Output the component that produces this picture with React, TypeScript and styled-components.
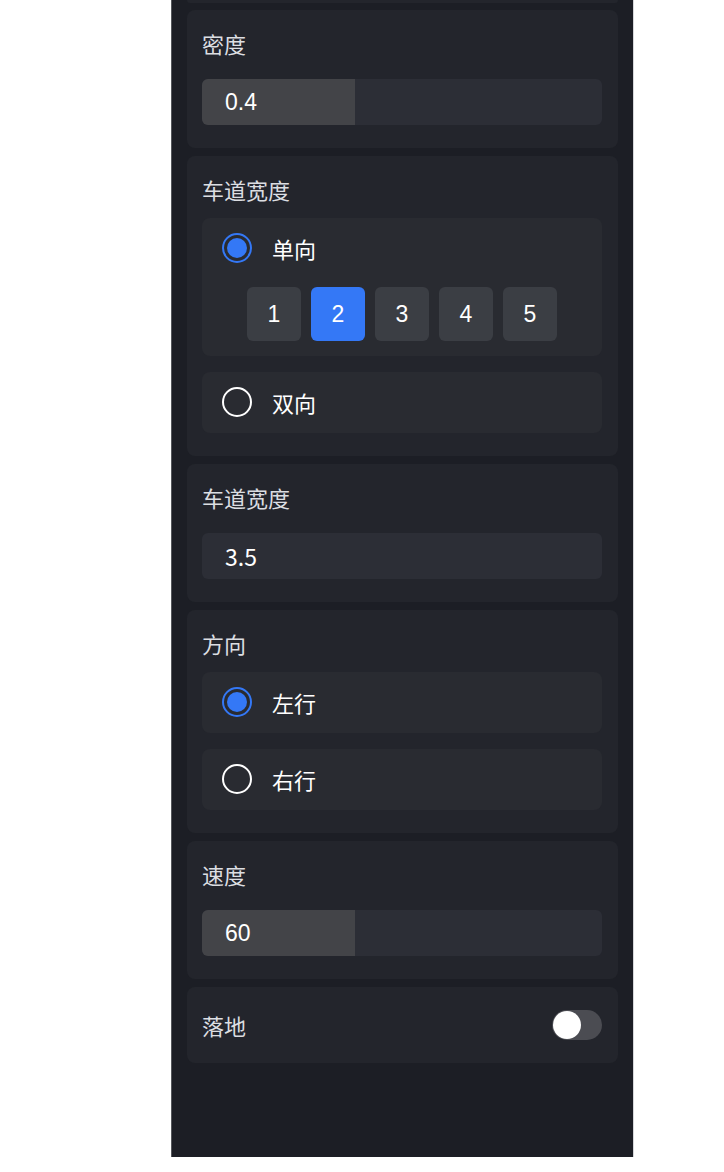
import React, { FC, useState } from 'react'
import styled, { createGlobalStyle } from 'styled-components'

const GlobalStyle = createGlobalStyle`
  html, body {
    margin: 0;
    padding: 0;
    background: #ffffff;
  }
  body {
    font-family: 'Liberation Sans', 'Noto Sans CJK SC', sans-serif;
  }
`

type TSlider = { value: string }

const SliderField: FC<TSlider> = (props: TSlider) => (
  <SliderTrack>
    <SliderValue>{props.value}</SliderValue>
  </SliderTrack>
)

type TRadio = { checked: boolean; label: string; children?: React.ReactNode; onSelect: () => void }

const RadioOption: FC<TRadio> = (props: TRadio) => (
  <OptionBox $extended={!!props.children}>
    <OptionRow onClick={props.onSelect}>
      <RadioCircle $checked={props.checked} />
      <OptionLabel>{props.label}</OptionLabel>
    </OptionRow>
    {props.children}
  </OptionBox>
)

export default function App() {
  const [mode, setMode] = useState<'single' | 'double'>('single')
  const [lanes, setLanes] = useState(2)
  const [dir, setDir] = useState<'left' | 'right'>('left')
  const [ground, setGround] = useState(false)

  return (
    <Page>
      <GlobalStyle />
      <Panel>
        <CardStub />

        <Card>
          <Title $gap={21}>密度</Title>
          <SliderField value="0.4" />
        </Card>

        <Card>
          <Title $gap={14}>车道宽度</Title>
          <OptionList>
            <RadioOption checked={mode === 'single'} label="单向" onSelect={() => setMode('single')}>
              <LaneButtons>
                {[1, 2, 3, 4, 5].map((n) => (
                  <LaneButton key={n} $active={lanes === n} onClick={() => setLanes(n)}>
                    {n}
                  </LaneButton>
                ))}
              </LaneButtons>
            </RadioOption>
            <RadioOption checked={mode === 'double'} label="双向" onSelect={() => setMode('double')} />
          </OptionList>
        </Card>

        <Card>
          <Title $gap={21}>车道宽度</Title>
          <TextInput>3.5</TextInput>
        </Card>

        <Card>
          <Title $gap={14}>方向</Title>
          <OptionList>
            <RadioOption checked={dir === 'left'} label="左行" onSelect={() => setDir('left')} />
            <RadioOption checked={dir === 'right'} label="右行" onSelect={() => setDir('right')} />
          </OptionList>
        </Card>

        <Card>
          <Title $gap={21}>速度</Title>
          <SliderField value="60" />
        </Card>

        <SwitchCard>
          <Title $gap={0}>落地</Title>
          <Switch $on={ground} onClick={() => setGround(!ground)}>
            <Knob />
          </Switch>
        </SwitchCard>
      </Panel>
    </Page>
  )
}

const Page = styled.div`
  display: flex;
  min-height: 1172px;
`

const Panel = styled.div`
  margin-left: 171px;
  width: 463px;
  height: 1157px;
  box-sizing: border-box;
  padding: 0 15px 0 15px;
  background: #1c1e25;
  border-left: 1px solid #55575c;
  border-right: 1px solid #d6d7da;
  display: flex;
  flex-direction: column;
  gap: 8px;
  overflow: hidden;
`

const CardStub = styled.div`
  height: 3px;
  flex-shrink: 0;
  background: #23252c;
  border-radius: 0 0 8px 8px;
  margin-bottom: -1px;
`

const Card = styled.div`
  background: #23252c;
  border-radius: 8px;
  padding: 18px 16px 23px 15px;
  display: flex;
  flex-direction: column;
`

const SwitchCard = styled(Card)`
  flex-direction: row;
  align-items: center;
  justify-content: space-between;
  padding: 23px 16px 23px 15px;
`

const Title = styled.div<{ $gap: number }>`
  font-family: 'Noto Sans CJK SC', sans-serif;
  font-size: 22px;
  line-height: 30px;
  color: #dcdee2;
  margin-bottom: ${(p) => p.$gap}px;
`

const SliderTrack = styled.div`
  height: 46px;
  border-radius: 6px;
  background: #2c2e36;
  overflow: hidden;
  display: flex;
`

const SliderValue = styled.div`
  width: 153px;
  background: #434448;
  box-sizing: border-box;
  padding-left: 23px;
  display: flex;
  align-items: center;
  font-size: 23px;
  color: #ffffff;
`

const TextInput = styled.div`
  height: 46px;
  border-radius: 6px;
  background: #2c2e36;
  box-sizing: border-box;
  padding-left: 23px;
  display: flex;
  align-items: center;
  font-family: 'Noto Sans CJK SC', sans-serif;
  font-size: 23px;
  color: #ffffff;
`

const OptionList = styled.div`
  display: flex;
  flex-direction: column;
  gap: 16px;
`

const OptionBox = styled.div<{ $extended: boolean }>`
  background: #292b31;
  border-radius: 8px;
  padding-bottom: ${(p) => (p.$extended ? 15 : 1)}px;
`

const OptionRow = styled.div`
  height: 60px;
  display: flex;
  align-items: center;
  padding-left: 20px;
  gap: 20px;
  cursor: pointer;
`

const RadioCircle = styled.span<{ $checked: boolean }>`
  width: 30px;
  height: 30px;
  box-sizing: border-box;
  border-radius: 50%;
  border: 2px solid ${(p) => (p.$checked ? '#3478f6' : '#ffffff')};
  display: flex;
  align-items: center;
  justify-content: center;
  &::after {
    content: '';
    width: 20px;
    height: 20px;
    border-radius: 50%;
    background: #3478f6;
    display: ${(p) => (p.$checked ? 'block' : 'none')};
  }
`

const OptionLabel = styled.span`
  font-family: 'Noto Sans CJK SC', sans-serif;
  font-size: 22px;
  color: #ffffff;
`

const LaneButtons = styled.div`
  display: flex;
  justify-content: center;
  gap: 10px;
  margin-top: 9px;
`

const LaneButton = styled.button<{ $active: boolean }>`
  width: 54px;
  height: 54px;
  border: none;
  border-radius: 6px;
  background: ${(p) => (p.$active ? '#3478f6' : '#3b3e44')};
  color: #ffffff;
  font-family: 'Liberation Sans', sans-serif;
  font-size: 23px;
  padding: 0;
  cursor: pointer;
`

const Switch = styled.div<{ $on: boolean }>`
  width: 50px;
  height: 30px;
  border-radius: 15px;
  background: ${(p) => (p.$on ? '#3478f6' : '#4b4c52')};
  display: flex;
  align-items: center;
  padding: 0 1px;
  box-sizing: border-box;
  justify-content: ${(p) => (p.$on ? 'flex-end' : 'flex-start')};
  cursor: pointer;
`

const Knob = styled.span`
  width: 28px;
  height: 28px;
  border-radius: 50%;
  background: #ffffff;
`
